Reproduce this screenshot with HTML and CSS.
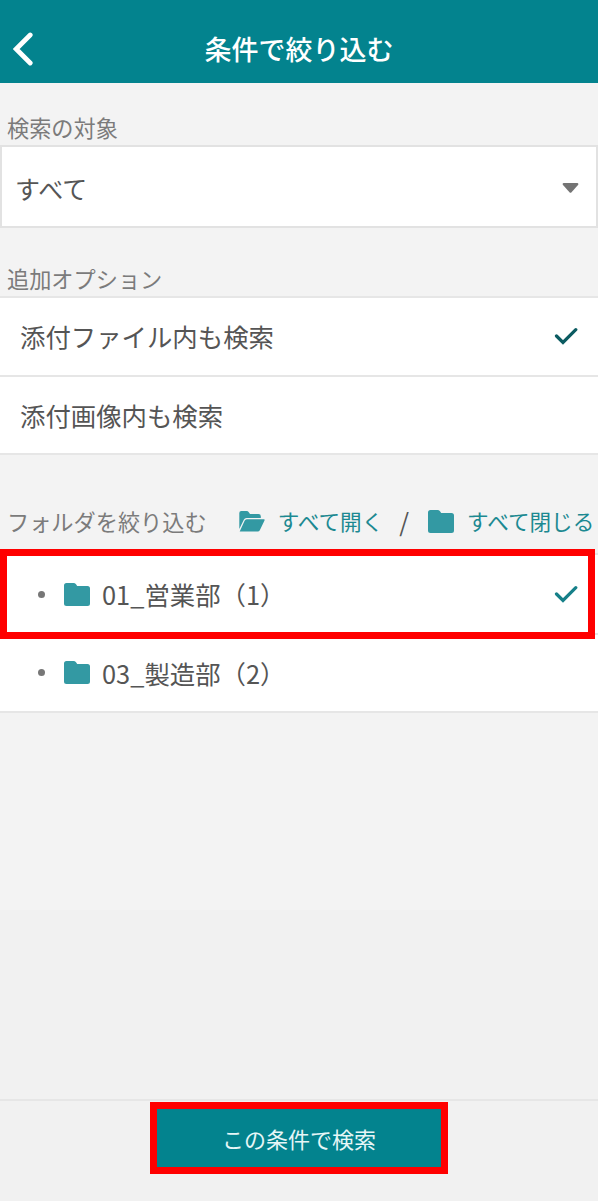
FILE: index.html
```html
<!DOCTYPE html>
<html lang="ja">

<head>
    <meta charset="UTF-8">
    <meta name="viewport" content="width=device-width, initial-scale=1.0">
    <title>条件で絞り込む</title>
    <link rel="stylesheet" href="styles.css">
</head>

<body>
    <header class="header">
        <svg class="back-icon" viewBox="0 0 20 34">
            <path d="M17.2 3 L3.2 17 L17.2 31" />
        </svg>
        <h1>条件で絞り込む</h1>
    </header>

    <main class="content">
        <h2 class="label target-label">検索の対象</h2>
        <div class="select-box">
            <span>すべて</span>
            <svg class="caret" viewBox="0 0 16 10">
                <path d="M1 0 H15 Q16.5 0.5 15.5 2 L8.8 9.4 Q8 10.2 7.2 9.4 L0.5 2 Q-0.5 0.5 1 0 Z" />
            </svg>
        </div>

        <h2 class="label option-label">追加オプション</h2>
        <ul class="list">
            <li class="row">
                <span>添付ファイル内も検索</span>
                <svg class="check check-dark" viewBox="0 0 24 18">
                    <path d="M2.5 9 L9 15.5 L21.8 2.7" />
                </svg>
            </li>
            <li class="row"><span>添付画像内も検索</span></li>
        </ul>

        <div class="folder-head">
            <h2 class="label">フォルダを絞り込む</h2>
            <div class="folder-link open-link">
                <svg class="folder-open" viewBox="0 0 26 21">
                    <path d="M0.3 18 V2 Q0.3 0 2.3 0 H7.5 Q9 0 9.8 1.2 L11 3 H19.5 Q21.8 3 21.8 5.2 V7 H7.5 Q5.7 7 4.8 8.7 Z" />
                    <path d="M0.7 20.5 L5.6 9.7 Q6.2 8.2 7.8 8.2 H24.8 Q26.2 8.2 25.5 9.6 L20.8 19.2 Q20.2 20.5 18.8 20.5 Z" />
                </svg>
                <span>すべて開く</span>
            </div>
            <span class="slash">/</span>
            <div class="folder-link">
                <svg class="folder" viewBox="0 0 26 23">
                    <path d="M0 2.5 Q0 0 2.5 0 H9.5 Q11 0 12 1.3 L13.2 3 H23.5 Q26 3 26 5.5 V20.5 Q26 23 23.5 23 H2.5 Q0 23 0 20.5 Z" />
                </svg>
                <span>すべて閉じる</span>
            </div>
        </div>

        <ul class="list folder-list">
            <li class="row folder-row selected">
                <i class="dot"></i>
                <svg class="folder" viewBox="0 0 26 23">
                    <path d="M0 2.5 Q0 0 2.5 0 H9.5 Q11 0 12 1.3 L13.2 3 H23.5 Q26 3 26 5.5 V20.5 Q26 23 23.5 23 H2.5 Q0 23 0 20.5 Z" />
                </svg>
                <span>01_営業部（1）</span>
                <svg class="check" viewBox="0 0 24 18">
                    <path d="M2.5 9 L9 15.5 L21.8 2.7" />
                </svg>
            </li>
            <li class="row folder-row">
                <i class="dot"></i>
                <svg class="folder" viewBox="0 0 26 23">
                    <path d="M0 2.5 Q0 0 2.5 0 H9.5 Q11 0 12 1.3 L13.2 3 H23.5 Q26 3 26 5.5 V20.5 Q26 23 23.5 23 H2.5 Q0 23 0 20.5 Z" />
                </svg>
                <span>03_製造部（2）</span>
            </li>
        </ul>
    </main>

    <footer class="footer">
        <button type="button" class="search-btn">この条件で検索</button>
    </footer>
</body>

</html>
```
FILE: styles.css
```css
*,
*::after {
    box-sizing: border-box;
}

body {
    margin: 0;
    height: 1201px;
    display: flex;
    flex-direction: column;
    font-family: "Noto Sans CJK JP", sans-serif;
    color: #555;
    background: linear-gradient(#f3f3f3 910px, #f1f1f1 910px);
    overflow: hidden;
}

h1,
h2,
ul {
    margin: 0;
    padding: 0;
}

svg {
    display: block;
    flex: none;
}

.header {
    display: grid;
    grid-template-columns: 40px 1fr 40px;
    align-items: center;
    height: 83px;
    padding-top: 15px;
    background-color: #03838e;
    color: #fff;
}

.header h1 {
    font-size: 27px;
    font-weight: 500;
    line-height: 40px;
    text-align: center;
}

.back-icon {
    width: 20px;
    height: 34px;
    margin-left: 13px;
    margin-bottom: 1px;
    fill: none;
    stroke: #fff;
    stroke-width: 4.8;
    stroke-linecap: round;
}

.content {
    flex: 1;
}

.label {
    font-size: 22.2px;
    font-weight: 400;
    line-height: 32px;
    color: #7b7b7b;
    white-space: nowrap;
}

.target-label {
    padding: 28px 7px 2px;
}

.select-box {
    display: flex;
    align-items: center;
    justify-content: space-between;
    height: 83px;
    padding: 2px 17px 0 13px;
    border: 2px solid #e2e2e2;
    background-color: #fff;
    font-size: 25px;
}

.caret {
    width: 17px;
    height: 10px;
    fill: #747474;
}

.option-label {
    padding: 34px 7px 2px;
}

.list {
    list-style: none;
    background-color: #fff;
    border-top: 2px solid #e6e6e6;
}

.row {
    display: flex;
    align-items: center;
    height: 78.5px;
    padding: 0 20px;
    border-bottom: 2px solid #e6e6e6;
    font-size: 25.4px;
    white-space: nowrap;
}

.check {
    width: 24px;
    height: 18px;
    margin-left: auto;
    fill: none;
    stroke: #168089;
    stroke-width: 3.2;
    stroke-linecap: round;
}

.check-dark {
    stroke: #0b5b61;
}

.folder-head {
    display: flex;
    align-items: center;
    height: 98px;
    padding: 34px 0 0 7px;
}

.folder-link {
    display: flex;
    align-items: center;
    gap: 13px;
    font-size: 21.6px;
    line-height: 32px;
    color: #1c8991;
    white-space: nowrap;
}

.open-link {
    margin-left: 32px;
}

.folder,
.folder-open {
    width: 26px;
    height: 23px;
    fill: #3399a3;
}

.folder-open {
    height: 21px;
}

.slash {
    margin: 0 19px 0 16px;
    font-size: 25px;
}

.folder-row {
    padding-left: 38px;
}

.folder-list {
    padding-top: 1px;
}

.dot {
    width: 7px;
    height: 7px;
    margin-right: 19px;
    border-radius: 50%;
    background-color: #777;
}

.folder-row .folder {
    margin-right: 12px;
}

.selected {
    position: relative;
}

/* highlight frame drawn over the row edges */
.selected::after {
    content: "";
    position: absolute;
    top: -7px;
    left: 0;
    width: 595px;
    height: 90px;
    border: 7px solid #f00;
}

.footer {
    display: flex;
    justify-content: center;
    height: 102px;
    padding-top: 1px;
    border-top: 2px solid #e6e6e6;
}

.search-btn {
    width: 298px;
    height: 72px;
    padding: 0;
    border: 7px solid #f00;
    background-color: #03838e;
    color: #e6f6f7;
    font-family: inherit;
    font-size: 22px;
}
```
